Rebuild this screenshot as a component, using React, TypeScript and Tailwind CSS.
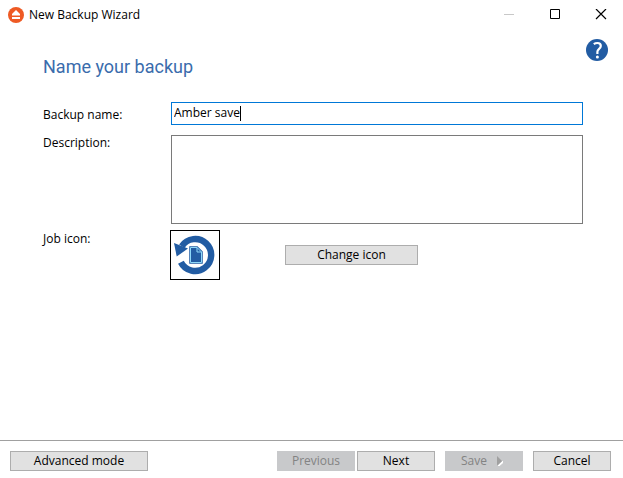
import { useState } from 'react';
import type { ButtonHTMLAttributes } from 'react';

function WizardButton({ className = '', children, ...props }: ButtonHTMLAttributes<HTMLButtonElement>) {
  return (
    <button
      type="button"
      className={`flex h-5 items-center justify-center border border-[#adadad] bg-[#e1e1e1] leading-4 text-black hover:border-[#0078d7] hover:bg-[#e5f1fb] disabled:border-[#c8c9cb] disabled:bg-[#c8c9cb] disabled:text-[#838383] ${className}`}
      {...props}
    >
      {children}
    </button>
  );
}

function AppLogo() {
  return (
    <svg className="size-4" viewBox="0 0 16 16" aria-hidden="true">
      <circle cx="8" cy="8" r="8" fill="#ee5a24" />
      <path d="M8 3 12 7v1.500H4V7z" fill="#fff" />
      <path d="M4 10h8v2H4z" fill="#fff" />
    </svg>
  );
}

function HelpIcon() {
  return (
    <svg className="size-[22px]" viewBox="0 0 22 22" aria-hidden="true">
      <circle cx="11" cy="11" r="11" fill="#225ca3" />
      <path
        d="M7.8 5.200C9 4.300 10.200 4 11.400 4c2.200 0 3.400 1.200 3.400 3 0 1.400-.8 2.200-1.900 3.100-1.100.9-1.500 1.500-1.500 2.600v2.300"
        fill="none"
        stroke="#fff"
        strokeWidth="2.200"
      />
      <circle cx="11.400" cy="18" r="1.500" fill="#fff" />
    </svg>
  );
}

function JobIcon() {
  return (
    <svg className="size-12" viewBox="0 0 48 48" aria-hidden="true">
      <path d="M10.800 15.200A16 16 0 1 1 9.900 31.200" fill="none" stroke="#225ca3" strokeWidth="6.400" />
      <path d="M3 12 17 17.500 5.700 25.500z" fill="#225ca3" />
      <path d="M19.500 16.500h6.500l4.500 4.500v10.500h-11z" fill="#225ca3" stroke="#225ca3" strokeWidth="2.500" />
      <path d="M19.500 16.500h6.500l4.500 4.500v10.500h-11z" fill="#225ca3" stroke="#8ed8f8" strokeWidth="1" />
      <path d="M26 16.500v4.500h4.500" fill="none" stroke="#8ed8f8" strokeWidth="1" />
    </svg>
  );
}

export default function App() {
  const [name, setName] = useState('Amber save');
  const [description, setDescription] = useState('');
  const [editing, setEditing] = useState(false);

  return (
    <div className="flex min-h-screen flex-col bg-white font-['Open_Sans',sans-serif] text-[12px] leading-4 text-black">
      <header className="flex h-[30px] items-center pr-4 pl-2">
        <AppLogo />
        <h1 className="ml-[5px] flex-1">New Backup Wizard</h1>
        <div className="flex items-center gap-[34px]">
          <button type="button" aria-label="Minimize" disabled>
            <svg className="size-3" viewBox="0 0 12 12" stroke="#c8c8c8">
              <path d="M1 5.500h10" />
            </svg>
          </button>
          <button type="button" aria-label="Maximize">
            <svg className="size-3" viewBox="0 0 12 12" fill="none" stroke="#000">
              <path d="M1.500 .5h9v9h-9z" />
            </svg>
          </button>
          <button type="button" aria-label="Close">
            <svg className="size-3" viewBox="0 0 12 12" stroke="#000" strokeWidth="1.200">
              <path d="M1 0l10 10M11 0L1 10" />
            </svg>
          </button>
        </div>
      </header>

      <main className="flex-1">
        <div className="flex items-start justify-between pt-[9px] pr-[15px] pl-[43px]">
          <h2 className="mt-4 font-['Roboto',sans-serif] text-[18px] leading-6 text-[#3a6cac]">Name your backup</h2>
          <button type="button" aria-label="Help">
            <HelpIcon />
          </button>
        </div>

        <form className="mt-[23px] grid grid-cols-[128px_1fr] items-start gap-y-2.5 pr-10 pl-[43px]">
          <label htmlFor="backup-name" className="pt-[5px]">Backup name:</label>
          <div className="relative">
            <input
              id="backup-name"
              type="text"
              value={name}
              onChange={(e) => setName(e.target.value)}
              onFocus={() => setEditing(true)}
              className="block h-[23px] w-full border border-[#0078d7] px-0.5 pb-0.5 outline-none"
            />
            {!editing && <span className="absolute top-1 left-[69px] h-[15px] w-px bg-black" />}
          </div>

          <label htmlFor="description">Description:</label>
          <textarea
            id="description"
            value={description}
            onChange={(e) => setDescription(e.target.value)}
            className="block h-[89px] w-full resize-none border border-[#7a7a7a] px-0.5 outline-none"
          />
        </form>

        <div className="mt-1.5 grid grid-cols-[127px_1fr] items-start pl-[43px]">
          <span className="pt-px">Job icon:</span>
          <div className="flex items-center gap-[65px]">
            <div className="border border-black">
              <JobIcon />
            </div>
            <WizardButton className="w-[133px]">Change icon</WizardButton>
          </div>
        </div>
      </main>

      <footer className="flex items-center border-t border-[#a0a0a0] px-2.5 pt-2.5 pr-3 pb-[7px]">
        <WizardButton className="w-[138px]">Advanced mode</WizardButton>
        <div className="ml-auto flex gap-2.5">
          <div className="flex gap-0.5">
            <WizardButton className="w-[78px]" disabled>Previous</WizardButton>
            <WizardButton className="w-[78px]">Next</WizardButton>
          </div>
          <WizardButton className="w-[78px] gap-2.5 pr-1" disabled>
            Save
            <svg className="h-2.5 w-1.5" viewBox="0 0 6 10" aria-hidden="true">
              <path d="M1 10 6 5v1.500L2 10z" fill="#fff" stroke="#fff" />
              <path d="M0 0 5 5 0 9.500z" fill="#a0a0a0" />
            </svg>
          </WizardButton>
          <WizardButton className="w-[78px]">Cancel</WizardButton>
        </div>
      </footer>
    </div>
  );
}
